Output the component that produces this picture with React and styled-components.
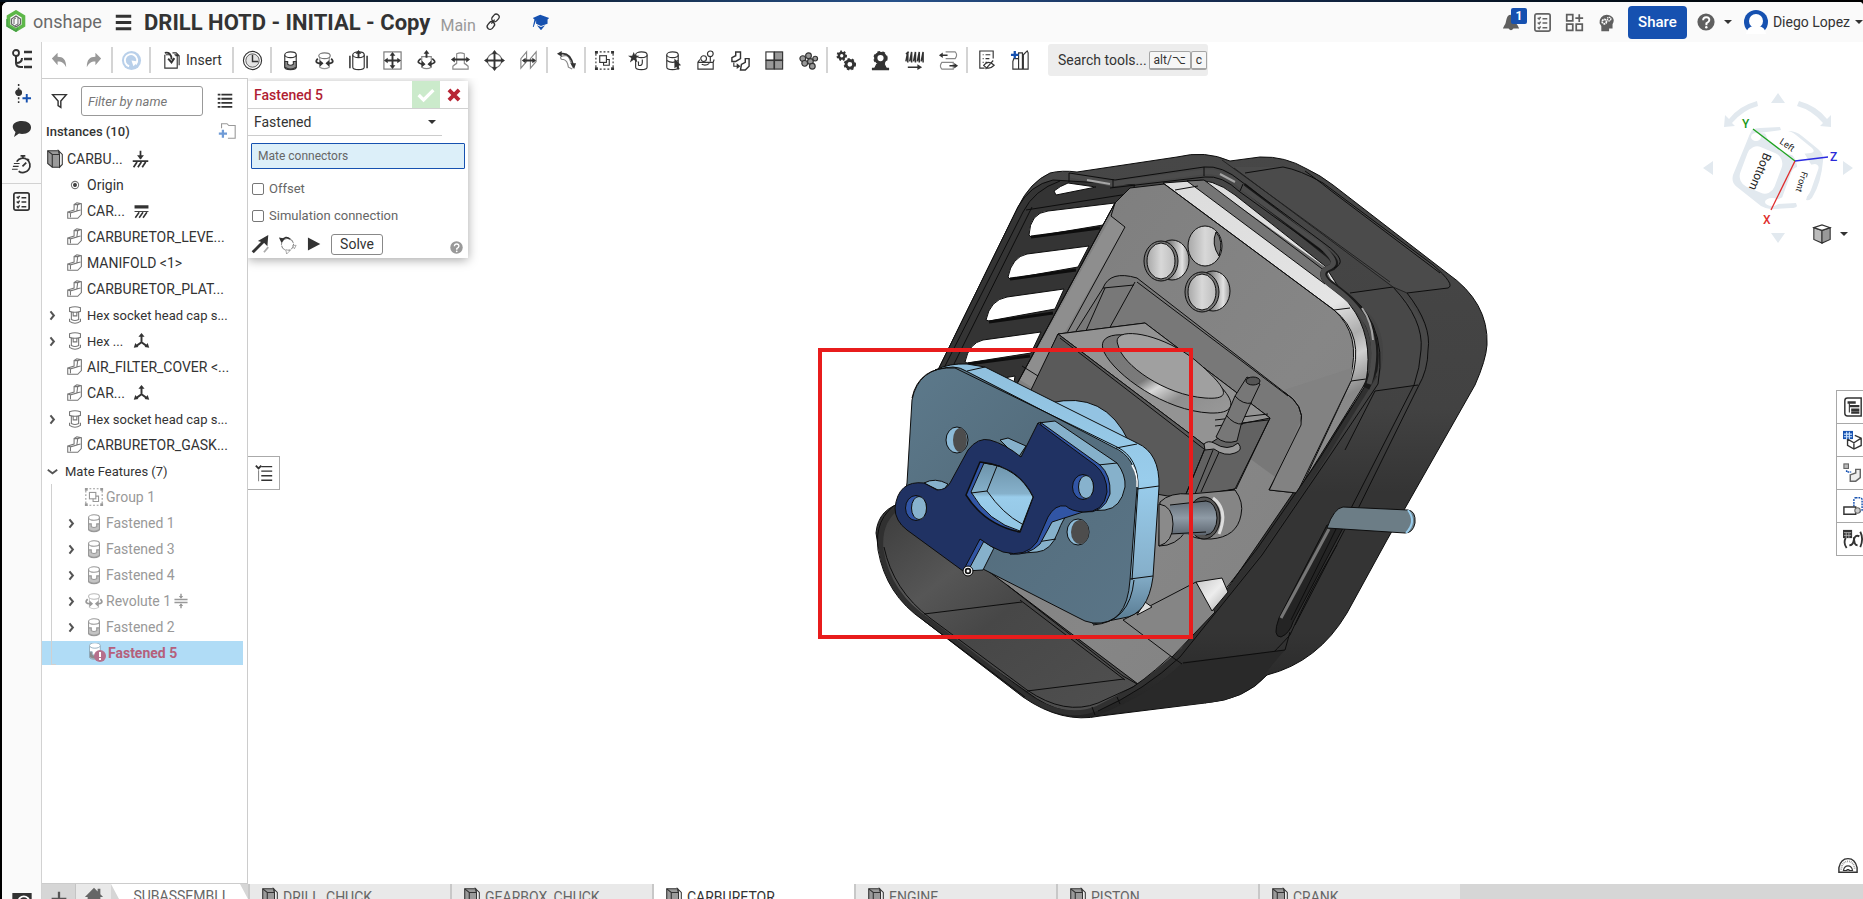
import React from "react";
import styled, { createGlobalStyle, css } from "styled-components";

const Global = createGlobalStyle`
  * { box-sizing: border-box; }
  body { margin: 0; background: #000; overflow: hidden; }
  body, button, input, select { font-family: Roboto, "Noto Sans", sans-serif; font-size: 14px; color: #333; }
  button { border: 0; padding: 0; background: none; cursor: pointer; }
  svg { display: block; flex: none; }
`;

/* ---------- page frame ---------- */
const Page = styled.div`
  height: 100vh;
  padding: 2px 0 0 2px;
  background: linear-gradient(90deg, #04101c 0, #10243c 30%, #27518a 48%, #183058 62%, #04101c 85%, #000 100%) top / 100% 2px no-repeat, #000;
`;
const Frame = styled.div`
  height: 100%;
  display: grid;
  grid-template: 40px minmax(0, 1fr) / 40px minmax(0, 1fr);
  border-radius: 6px 4px 0 0;
  overflow: hidden;
  background: #fff;
`;
const Header = styled.header`
  grid-column: 1 / -1;
  display: flex;
  align-items: center;
  background: #fafafa;
  padding-left: 4px;
`;
const Brand = styled.a`
  display: flex;
  align-items: center;
  gap: 7px;
  width: 107px;
  padding-bottom: 2px;
  font-size: 18px;
  color: #6a6a6a;
  text-decoration: none;
`;
const Title = styled.h1`
  margin: 2px 10px 0 10px;
  font-size: 22px;
  line-height: 36px;
  font-weight: 700;
  white-space: nowrap;
`;
const Branch = styled.span`
  font-size: 16px;
  color: #999;
  margin-right: 8px;
  padding-top: 6px;
`;
const HeadTools = styled.div`
  margin-left: auto;
  display: flex;
  align-items: center;
  color: #5f5f5f;
`;
const HeadButton = styled.button`
  position: relative;
  display: grid;
  place-items: center;
  width: ${(p) => p.$w || 32}px;
  height: 32px;
  color: inherit;
`;
const Badge = styled.span`
  position: absolute;
  top: 2px;
  right: 0;
  width: 16px;
  height: 16px;
  border-radius: 2px;
  background: #1651b0;
  color: #fff;
  font-size: 12px;
  line-height: 16px;
  font-weight: 700;
`;
const Share = styled.button`
  width: 59px;
  height: 33px;
  margin: 0 8px 0 5px;
  border-radius: 4px;
  background: #1651b0;
  color: #fff;
  font-size: 15px;
  font-weight: 500;
`;
const Account = styled.button`
  display: flex;
  align-items: center;
  gap: 5px;
  margin-left: 6px;
`;
const Caret = styled.span`
  display: inline-block;
  border: 4px solid transparent;
  border-top: 4px solid #333;
  border-bottom: 0;
`;

/* ---------- left rail ---------- */
const Rail = styled.nav`
  display: flex;
  flex-direction: column;
  align-items: center;
  background: #fafafa;
  border-right: 1px solid #d2d2d2;
`;
const RailButton = styled.button`
  display: grid;
  place-items: center;
  width: 36px;
  height: ${(p) => p.$h || 35}px;
`;
const RailLine = styled.hr`
  width: 100%;
  margin: 0;
  border: 0;
  border-top: 1px solid #d2d2d2;
`;
const RailFoot = styled.div`
  margin-top: auto;
  height: 9px;
  overflow: hidden;
`;

/* ---------- toolbar ---------- */
const Main = styled.div`
  display: grid;
  grid-template-rows: 36px minmax(0, 1fr) 15px;
  min-width: 0;
`;
const Toolbar = styled.div`
  display: flex;
  align-items: center;
  background: #fff;
`;
const Tool = styled.button`
  display: flex;
  align-items: center;
  justify-content: center;
  gap: 4px;
  width: ${(p) => (p.$wide ? 79 : 34)}px;
  height: 32px;
  flex: none;
`;
const Sep = styled.span`
  width: 2px;
  height: 26px;
  margin: 0 1px;
  background: #d4d4d4;
  flex: none;
`;
const Search = styled.button`
  display: flex;
  align-items: center;
  height: 32px;
  width: 160px;
  margin-left: 11px;
  padding-left: 10px;
  border-radius: 3px;
  background: #ededed;
  flex: none;
`;
const Key = styled.kbd`
  font: 12px Roboto, "DejaVu Sans", sans-serif;
  line-height: 16px;
  padding: 0 4px;
  border: 1px solid #a5a5a5;
  border-bottom-width: 2px;
  border-radius: 2px;
  background: #f6f6f6;
  &:first-of-type { margin-left: 2px; }
`;

/* ---------- body ---------- */
const Body = styled.div`
  display: grid;
  grid-template-columns: 206px minmax(0, 1fr);
  min-height: 0;
`;
const TreePanel = styled.aside`
  border: 1px solid #ccc;
  border-left: 0;
  padding-top: 7px;
`;
const FilterRow = styled.div`
  display: flex;
  align-items: center;
  gap: 12px;
  padding-left: 7px;
  input {
    width: 122px;
    height: 30px;
    border: 1px solid #999;
    border-radius: 3px;
    padding: 0 6px;
    font-size: 13px;
    font-style: italic;
  }
  input::placeholder { color: #777; opacity: 1; }
`;
const Count = styled.div`
  display: flex;
  align-items: center;
  justify-content: space-between;
  height: 30px;
  padding: 0 10px 0 4px;
  font-size: 13px;
  font-weight: 500;
`;
const Tree = styled.ul`
  list-style: none;
  margin: 0;
  padding: 0;
`;
const Row = styled.li`
  display: flex;
  align-items: center;
  height: 26px;
  padding-left: ${(p) => p.$pad}px;
  white-space: nowrap;
  font-size: ${(p) => (p.$small ? 13 : 14)}px;
  color: ${(p) => (p.$dim ? "#999" : "#333")};
  ${(p) => p.$bad && css`
    height: 24px;
    margin: 1px 4px 0 0;
    background: #b0dcf6;
    color: #b5607c;
    font-weight: 700;
  `}
`;
const Twist = styled.span`
  width: 20px;
  flex: none;
`;
const Label = styled.span`
  margin-left: ${(p) => p.$gap || 2}px;
  width: ${(p) => (p.$w ? p.$w + "px" : "auto")};
`;
const Branching = styled.div`
  position: relative;
  &::before {
    content: "";
    position: absolute;
    z-index: 1;
    left: 9px;
    top: 0;
    bottom: 0;
    width: 4px;
    border: 1px solid #d0d0d0;
    border-width: 0 0 1px 1px;
  }
`;
const Canvas = styled.main`
  position: relative;
  overflow: hidden;
  background: #fff;
`;
const OnCanvas = styled.div`
  position: absolute;
  left: ${(p) => p.$left}px;
  right: ${(p) => p.$right}px;
  top: ${(p) => p.$top}px;
  bottom: ${(p) => p.$bottom}px;
`;
const Handle = styled.button`
  display: grid;
  place-items: center;
  width: 32px;
  height: 34px;
  border: 1px solid #aaa;
  border-left: 0;
  background: #fff;
`;
const SideTabs = styled.div`
  width: 27px;
  border: 1px solid #a8a8a8;
  border-width: 1px 0 0 1px;
  background: #fff;
  button {
    display: flex;
    align-items: center;
    width: 100%;
    height: 33px;
    padding-left: 6px;
    border-bottom: 1px solid #a8a8a8;
    overflow: hidden;
  }
`;
const CubeMenu = styled.button`
  display: flex;
  align-items: center;
  gap: 8px;
`;

/* ---------- mate dialog ---------- */
const Dialog = styled.form`
  width: 220px;
  height: 177px;
  background: #fff;
  box-shadow: 0 2px 10px rgba(0, 0, 0, 0.35);
`;
const DialogHead = styled.div`
  display: flex;
  align-items: center;
  height: 28px;
  padding-left: 6px;
  border-bottom: 1px solid #d0d0d0;
  color: #b01e33;
  font-weight: 500;
`;
const Accept = styled.button`
  display: grid;
  place-items: center;
  width: 28px;
  height: 27px;
  margin-left: auto;
  background: #cbeacb;
`;
const Cancel = styled.button`
  display: grid;
  place-items: center;
  width: 28px;
  height: 27px;
`;
const MateType = styled.label`
  display: flex;
  align-items: center;
  width: 194px;
  height: 27px;
  border-bottom: 1px solid #ccc;
  select {
    appearance: none;
    border: 0;
    background: none;
    padding: 0 6px;
    width: 180px;
  }
`;
const Connectors = styled.div`
  height: 26px;
  margin: 7px 3px 6px;
  padding-left: 6px;
  border: 1px solid #1651b0;
  border-radius: 1px;
  background: #dceff9;
  color: #666;
  font-size: 12px;
  line-height: 24px;
`;
const Check = styled.label`
  display: flex;
  align-items: center;
  gap: 5px;
  height: 27px;
  padding-left: 4px;
  color: #666;
  font-size: 13px;
  input {
    appearance: none;
    width: 12px;
    height: 12px;
    margin: 0;
    border: 1px solid #777;
    border-radius: 2px;
  }
`;
const Actions = styled.div`
  display: flex;
  align-items: center;
  gap: 8px;
  height: 30px;
  padding: 0 5px 0 3px;
`;
const Solve = styled.button`
  width: 52px;
  height: 21px;
  margin-left: 2px;
  border: 1px solid #888;
  border-radius: 3px;
`;
const Help = styled.button`
  display: block;
  margin: 6px 0 0 auto;
  color: #999;
`;

/* ---------- bottom tabs ---------- */
const TabBar = styled.nav`
  display: flex;
  height: 15px;
  overflow: hidden;
  background: #d6d6d6;
`;
const AddTab = styled.button`
  display: grid;
  place-items: center;
  width: 34px;
  height: 29px;
  border-right: 1px solid #c4c4c4;
`;
const Crumb = styled.button`
  display: flex;
  align-items: center;
  justify-content: center;
  width: ${(p) => p.$w}px;
  height: 24px;
  background: ${(p) => (p.$on ? "#fff" : "#e9e9e9")};
  color: #666;
  clip-path: ${(p) => (p.$on ? "polygon(0 0, 129px 0, 137px 15px, 100% 100%, 8px 100%, 8px 15px)" : "none")};
`;
const Tab = styled.button`
  display: flex;
  align-items: flex-start;
  gap: 3px;
  width: 202px;
  height: 30px;
  padding: 3px 0 0 10px;
  border-left: 2px solid #c8c8c8;
  background: ${(p) => (p.$on ? "#fff" : "#e9e9e9")};
  color: ${(p) => (p.$on ? "#333" : "#666")};
  span { padding-top: 2px; }
`;

/* ---------- icons ---------- */
const cyl = (
  <>
    <path d="M5 5v13c0 1.500 3 2.500 6 2.500s6-1 6-2.500V5" fill="#fff" />
    <ellipse cx="11" cy="5" rx="6" ry="3" fill="#fff" />
  </>
);
const gear = (cx, cy, r) => (
  <g key={cx + "-" + cy}>
    <circle cx={cx} cy={cy} r={r - 2} fill="none" strokeWidth={r * 0.5} />
    <circle cx={cx} cy={cy} r={r - 0.5} fill="none" strokeWidth="2" strokeDasharray={`${r * 0.38} ${r * 0.38}`} />
  </g>
);
const A = (d) => <path d={d} fill="#333" stroke="none" />;
const icons = {
  undo: <path d="M3 9 9 3v4c6 0 9 3 9 11-2-4-4-6-9-6v4z" fill="#999" stroke="none" />,
  redo: <path d="M19 9 13 3v4c-6 0-9 3-9 11 2-4 4-6 9-6v4z" fill="#999" stroke="none" />,
  update: <><circle cx="11" cy="11" r="10" fill="#b9d0ea" stroke="none" /><path d="M8.500 17a6.500 6.500 0 1 1 7-2" stroke="#fff" strokeWidth="2" /><path d="M11 11l7 1-5 5z" fill="#fff" stroke="none" /></>,
  insert: <><path d="M5 5h4M14 5h3v14H4V5M12 3h4l3 3v10M15 6h4" /><path d="M4 3c4-1 7 1 7 7M7.500 9l3.500 4 3-4.500" strokeWidth="2" /></>,
  clock: <><circle cx="11" cy="11" r="9.500" /><circle cx="11" cy="11" r="7" fill="#e3e3e3" strokeWidth=".8" /><path d="M11 5v7h6" strokeWidth="1.500" /></>,
  fastened: <>{cyl}<path d="M5 12h3v3q3 2 6 0v-3h3v6q-6 4-12 0z" fill="#8b8b8b" /></>,
  revolute: <><path d="M6 7h10v11q-5 3-10 0z" fill="#fff" stroke="#999" /><ellipse cx="11" cy="6" rx="6" ry="3" fill="#fff" stroke="#777" /><path d="M4 9c-3 3-2 5 3 5M18 9c3 3 2 5-3 5" strokeWidth="1.800" />{A("M6 10.500l4 3.500-4 3.500zM16 10.500l-4 3.500 4 3.500z")}</>,
  slider: <>{cyl}<path d="M2 6v13M20 6v13" strokeWidth="1.600" /><path d="M11 8V2" strokeWidth="2" />{A("M8 4l3-4 3 4z")}</>,
  planar: <><rect x="2" y="2" width="18" height="18" fill="#fff" stroke="#777" /><path d="M11 5v12M5 11h12" strokeWidth="2" />{A("M11 2l3 4H8zM11 20l-3-4h6zM2 11l4-3v6zM20 11l-4 3V8z")}</>,
  cylindrical: <><path d="M6 7h10v11q-5 3-10 0z" fill="#fff" stroke="#888" /><path d="M11 8V3" strokeWidth="2" />{A("M8 4l3-4 3 4z")}<path d="M5 9c-5 4-2 5 2 6M17 9c5 4 2 5-2 6" strokeWidth="1.800" />{A("M6 11l4 4-4 3zM16 11l-4 4 4 3z")}</>,
  pin: <><path d="M7 4q4-2 8 0v10q2 1 4 3v3H3v-3q2-2 4-3z" fill="#fff" stroke="#888" /><path d="M4 10h14" strokeWidth="2" />{A("M1 10l4-3v6zM21 10l-4 3V7z")}</>,
  ball: <><circle cx="11" cy="11" r="7.500" fill="#fff" stroke="#777" /><path d="M11 2v18M2 11h18" strokeWidth="2" />{A("M11 0l3 4H8zM11 22l-3-4h6zM0 11l4-3v6zM22 11l-4 3V8z")}</>,
  parallel: <><path d="M3 19V9l6-7v10zM13 19V9l6-7v10z" fill="#fff" stroke="#888" /><path d="M6 11h11" strokeWidth="2" />{A("M4 11l4-3v6zM19 11l-4 3V8z")}</>,
  tangent: <><path d="M5 7q7-3 9 2l4 10M5 7q-1 3 3 3 4 1 5 8l4 2" fill="#fff" stroke="#888" /><path d="M5 4c6-1 11 3 13 12" strokeWidth="1.800" />{A("M1 4l5-3v6zM15 14h6l-2 6z")}</>,
  group: <><rect x="2" y="2" width="18" height="18" strokeDasharray="2 2" /><rect x="6" y="6" width="7" height="7" /><path d="M10 13v3h6v-6h-3" />{A("M1 1h3v3H1zM18 1h3v3h-3zM1 18h3v3H1zM18 18h3v3h-3z")}</>,
  star: <><g transform="translate(3 0)">{cyl}</g><path d="M11 12v4q4 1 4-3v-3" />{A("M6 2l1.600 4H12L8.500 8.500 10 13 6 10.300 2 13l1.500-4.500L0 6h4.400z")}</>,
  pickMate: <>{cyl}<path d="M5 11q6 4 12 0" />{A("M13 9l7 7-3 .5 1.500 3.500-2 1-1.500-3.500-2 2z")}</>,
  mateconn: <><circle cx="8" cy="9" r="3" /><circle cx="15" cy="4" r="3" /><path d="M15 7v5M2 13h16v7H2zM2 13l2-3M18 13l1-3M6 15q4 2 8-1" /></>,
  replicate: <><path d="M2 8l4-2V2h5v7l-5 3H2zM12 15l4-2V9h4v8l-4 4h-5z" fill="#fff" strokeWidth="1.500" /><path d="M4 13v4h4" />{A("M7 14l4 3-4 3z")}</>,
  pattern: <><rect x="2" y="2" width="8.500" height="8.500" fill="#fff" /><rect x="11" y="2" width="8.500" height="8.500" fill="#999" /><rect x="2" y="11" width="8.500" height="9" fill="#999" /><rect x="11" y="11" width="8.500" height="9" fill="#999" /></>,
  cluster: <g fill="#999"><circle cx="5" cy="9" r="3" /><circle cx="11" cy="6" r="3" /><circle cx="7" cy="14" r="3" /><circle cx="13" cy="12" r="3" /><circle cx="18" cy="9" r="2.500" /><circle cx="15" cy="17" r="3" /></g>,
  gears: <>{gear(6, 6, 5)}{gear(14.500, 15, 6)}</>,
  rack: <>{gear(11, 8.500, 7)}<path d="M2 20h18" strokeWidth="2.600" /><path d="M5 19l2-4h8l2 4z" fill="#333" /></>,
  screw: <><path d="M4 2v11M8 2v11M12 2v11M16 2v11M20 2v11M2 4l3-2M2 12l2-10M6 12l2-10M10 12l2-10M14 12l2-10M18 12l2-10" strokeWidth="1.600" /><path d="M4 18h12" strokeWidth="1.600" />{A("M14 15l5 3-5 3z")}</>,
  linear: <><path d="M8 2h10q3 3 0 7H8M4 13h12v7H4q-3-3 0-7z" stroke="#888" fill="#fff" /><path d="M4 5.500h6M12 16.500h6" strokeWidth="1.800" />{A("M1 5.500l4-3v6zM21 16.500l-4-3v6z")}</>,
  bom: <><path d="M18 9V1H4v18h5M7 5h1M10 5h5M7 9h1M10 9h4M7 13h1M10 13h2" /><path d="M8 16q5-6 11 0-6 6-11 0zM10 20l8-9" /></>,
  display: <><path d="M4 9h5v11H3v-8zM9 3h4v17H9zM14 5l4-4 1 2v17h-5z" fill="#fff" /><path d="M1 5h8M5 1v8" stroke="#1651b0" strokeWidth="2.400" /></>,
  funnel: <path d="M4 4h15l-6 7v7l-3-2v-5z" strokeWidth="1.600" />,
  list: <path d="M3 4h3M3 8.500h3M3 13h3M3 17.500h3M7 4h12M7 8.500h12M7 13h12M7 17.500h12" strokeWidth="2" />,
  part: <path d="M3 12l7-2V4l3-2 5 1v12l-4 4H3zM3 12l3 1 7-2 1-7M6 13v5M13 11l4-1M10 4l4 0 3-1" stroke="#777" fill="#fff" />,
  assembly: <><path d="M3 2h12l1 4v14H8l-5-4z" fill="#9a9a9a" /><path d="M15 2l4 4v11l-3 3V6z" fill="#fff" /><path d="M3 2l5 4h8M8 6v14" /></>,
  screwPart: <path d="M5 3q6-2 12 0v4q-6 2-12 0zM7 8v8q4 2 8 0V8M9 8v4h4V8M5 15v3q6 4 12 0v-3" stroke="#777" fill="#fff" />,
  origin: <><circle cx="11" cy="11" r="4" stroke="#777" /><circle cx="11" cy="11" r="1.500" fill="#555" /></>,
  ground: <><path d="M11 1v9M2 13h18" strokeWidth="2" />{A("M7 6h8l-4 5z")}<path d="M3 20l4-6M8 20l4-6M13 20l4-6" strokeWidth="2" /></>,
  fixed: <><path d="M2 5h18" strokeWidth="4" /><path d="M2 11h18" /><path d="M3 19l5-7M8 19l5-7M13 19l5-7" strokeWidth="2" /></>,
  triad: <><path d="M11 3v9l-7 5M11 12l7 5" strokeWidth="2.500" />{A("M11 0l4 5H7zM1 19l2-6 4 5zM21 19l-2-6-4 5z")}</>,
  limit: <><path d="M2 9h18M2 13h18M11 1v6M11 21v-6" strokeWidth="2" stroke="#999" /><path d="M8 4h6l-3 4zM8 18h6l-3-4z" fill="#999" stroke="none" /></>,
  right: <path d="M8 5l5 6-5 6" strokeWidth="3" stroke="#555" />,
  down: <path d="M3 8l8 6 8-6" strokeWidth="3" stroke="#555" />,
  folder: <><path d="M5 8V3h6l2 2h7v14H12" stroke="#999" /><path d="M2 14h9M6.500 9.500v9" stroke="#6f9bd6" strokeWidth="2.500" /></>,
  tree: <><circle cx="5" cy="4" r="3" strokeWidth="1.800" /><path d="M5 7v7q0 4 5 4h2M5 14q6 0 6-5" strokeWidth="2" /><path d="M13 3h8M13 10h8M13 18h8" strokeWidth="2.400" /></>,
  addFeature: <><path d="M8 0v6M8 14v8" strokeDasharray="2 2" strokeWidth="1.600" /><circle cx="8" cy="9" r="3" fill="#333" /><path d="M12 15h9M16.500 10.500v9" stroke="#1651b0" strokeWidth="2" /></>,
  chat: <path d="M11 3c12 0 12 13 0 13-1 0-2 0-3-.4L3 19l1.500-5C-1 9 2 3 11 3z" fill="#333" stroke="none" />,
  timer: <><path d="M6 8a7.500 7.500 0 1 1 2 10M10 2h5M12.500 2v3M17 5l2 2M12 13l4-4" strokeWidth="1.800" /><path d="M3 10h6M2 13h6M1 16h6" /></>,
  checklist: <><rect x="3" y="2" width="16" height="18" rx="2" strokeWidth="1.800" /><path d="M6 6l1.500 1.500L9 5M6 11l1.500 1.500L9 10M6 16l1.500 1.500L9 15M11 7h5M11 11.500h5M11 16.500h5" strokeWidth="1.500" /></>,
  bell: <path d="M11 2c-7 0-5 10-8 13l-2 4h20l-2-4c-3-3-1-13-8-13zM8 19h6q-3 4-6 0z" fill="currentColor" stroke="none" />,
  apps: <><path d="M2 2h7v7H2zM2 13h7v7H2zM13 13h7v7h-7z" strokeWidth="2" /><path d="M12 6h9M16.500 1.500v9" strokeWidth="2" /></>,
  head: <><path d="M11 2a8.500 8.500 0 0 0-8 10l2 3v6h9v-3h4v-5c4-6-1-11-7-11z" fill="currentColor" stroke="none" /><circle cx="8.500" cy="10" r="2.500" stroke="#fafafa" strokeWidth="2" strokeDasharray="2 .6" /><circle cx="14" cy="7" r="2" stroke="#fafafa" strokeWidth="1.600" strokeDasharray="1.500 .6" /></>,
  link: <g strokeWidth="1.600"><rect x="9" y="2.500" width="10" height="7" rx="3.500" transform="rotate(-50 14 6)" /><rect x="3" y="12" width="10" height="7" rx="3.500" transform="rotate(-50 8 15)" /><path d="M9 13l4-5" /></g>,
  cap: <path d="M10 2l11 4-2 2v5l-8 3-6-3V9l-3 8H1L3 8 1 6zM6 15l5 6 5-6-5 2z" fill="#1651b0" stroke="none" />,
  home: <path d="M11 2l4 4V3h3v6l3 3h-3v8H4v-8H1z" fill="#666" stroke="none" />,
  plus: <path d="M11 2v18M2 11h18" stroke="#555" strokeWidth="2.800" />,
  cube: <><path d="M2 4l9 3v14l-9-4z" fill="#bbb" /><path d="M11 7l9-3v13l-9 4z" fill="#999" /><path d="M2 4l9-3 9 3-9 3z" fill="#fff" /></>,
  configs: <><path d="M5 1h15v20H5q-3 0-3-3V4q0-3 3-3z" strokeWidth="1.600" /><path d="M5 6h9M7 10h11M9 14h9M9 17h9" strokeWidth="2.600" /><path d="M7 7v10" /></>,
  tableCube: <><path d="M5 10v7l7 4 8-4V9l-7-3M5 10l7 4 8-5M12 14v7" fill="#fff" strokeWidth="1.500" /><rect x="0" y="1" width="11" height="9" fill="#1651b0" stroke="none" /><path d="M1 4.500h9M1 7.500h9M4 2v8M7 2v8" stroke="#cfe6ff" /></>,
  explode: <><rect x="1" y="1" width="5" height="5" fill="#bbb" stroke="#666" /><path d="M4 8v2h5" stroke="#1651b0" strokeDasharray="2 1" strokeWidth="1.600" /><path d="M8 13l6-2V7h5v9l-5 4H8z" stroke="#666" strokeWidth="1.600" fill="#eee" /></>,
  motion: <><rect x="12" y="2" width="9" height="15" rx="2" stroke="#1651b0" strokeDasharray="2 1" strokeWidth="1.600" /><path d="M1 12h13v8H1z" fill="#fff" strokeWidth="1.600" /><circle cx="16" cy="16" r="3" fill="#ccc" stroke="#666" /></>,
  variables: <><path d="M3 10q-3 5 1 11M19 3q4 8 0 17" strokeWidth="2" /><path d="M7 18q4 0 5-6t6-4M12 9q0 9 4 9" strokeWidth="2.200" /><rect x="0" y="1" width="10" height="9" fill="#333" stroke="none" /><path d="M1 4h8M1 7h8M3.500 4v6M6.500 4v6" stroke="#ccc" strokeWidth=".8" /></>,
  protractor: <><path d="M1 19v-5Q3 4 11 4t10 10v5z" fill="#fff" strokeWidth="1.600" /><path d="M3.500 16q1-9 7.500-9t7.500 9" stroke="#999" strokeDasharray="1 1" strokeWidth="2" /><path d="M6 17q1-5 5-5t5 5h-4v-1h-2v1z" /></>,
  handle: <><path d="M2 3l3 3 3-3" strokeWidth="2" /><path d="M5 8v12" stroke="#888" /><path d="M8 4h12M8 9h12M8 14h12M8 19h12" strokeWidth="1.500" /></>,
  flip: <><path d="M2 20l13-13" strokeWidth="3.400" />{A("M20 0l-1 13-4-4-7-2z")}<path d="M15 20l5-6" stroke="#aaa" strokeWidth="2" /></>,
  rotate: <><circle cx="11" cy="11" r="7" strokeDasharray="6 1" stroke="#888" /><path d="M4 7q5-7 10-2" strokeWidth="1.800" />{A("M1 3l7 1-4 5z")}<path d="M17 12h4l-2 4zM9 17l5 1-4 4z" stroke="#888" fill="#fff" strokeWidth=".8" /></>,
  play: A("M4 2l17 9-17 9z"),
  help: <><circle cx="11" cy="11" r="10.500" fill="currentColor" stroke="none" /><path d="M7.500 9q0-4 4-3.800T15 9q0 2-3.500 3.800V15" stroke="#fff" strokeWidth="2.400" /><circle cx="11.400" cy="17.500" r="1.500" fill="#fff" stroke="none" /></>,
  tick: <path d="M2 11l6 6L20 5" stroke="#fff" strokeWidth="4" />,
  cross: <path d="M3 3l16 16M19 3L3 19" stroke="#b82535" strokeWidth="6" />,
  camera: <><path d="M1 4h20v16H1z" fill="#333" /><circle cx="13" cy="13" r="6" stroke="#fff" strokeWidth="2" /><circle cx="13" cy="12" r="1" fill="#fff" /></>,
  hamburger: <path d="M1 3h20M1 11h20M1 19h20" strokeWidth="4" />,
};
const Icon = ({ n, s = 20, o }) => (
  <svg width={s} height={s} viewBox="0 0 22 22" fill="none" stroke={["bell", "apps", "head"].includes(n) ? "currentColor" : "#333"} strokeWidth="1.200" opacity={o} aria-hidden="true">
    {icons[n]}
  </svg>
);

const Logo = () => (
  <svg width="20" height="22" viewBox="0 0 20 22" fill="none" aria-hidden="true">
    <path d="M10 2l7.500 4.500v9L10 20l-7.500-4.500v-9z" stroke="#5db749" strokeWidth="3.600" />
    <path d="M1 9v7l9 5 2-3" stroke="#46a046" strokeWidth="1.500" />
    <path d="M10 6l4.500 3v5L10 17l-4.500-3V9z" stroke="#666" strokeWidth="1.300" />
    <path d="M12 8v6l-3 1.500M8 14V9l2-1" stroke="#666" />
  </svg>
);
const Avatar = () => (
  <svg width="24" height="24" viewBox="0 0 24 24" aria-hidden="true">
    <circle cx="12" cy="12" r="12" fill="#1651b0" />
    <circle cx="12" cy="11" r="7" fill="#fff" />
    <path d="M2 24q1-7 7-8h6q6 1 7 8z" fill="#fff" />
  </svg>
);

/* ---------- view cube ---------- */
const ViewCube = () => (
  <svg width="151" height="152" viewBox="1703 92 151 152" fontFamily="Roboto, sans-serif">
    <g fill="#e2e9ef">
      <path d="M1778 93l7 10h-14zM1778 243l7-10h-14zM1703 168l10-7v14zM1853 168l-10-7v14z" />
      <path d="M1757 101q-18 5-28 18l-4-4-1 12 11-1-3-3q11-13 26-17zM1799 101q18 5 28 18l4-4 0 12-11-1 3-3q-11-13-26-17z" />
      <path d="M1752 130q3-2 8-2l20-1 1 3-22 3q12 0 20 9l14 14q5 6 4 16l-5 21-22 10q5 2 8 1l18-1 1 3q-1 2-6 2l-17 1q-6 1-13-3l-24-19q-6-4-4-12l14-34q2-6 5-11z" />
      <path d="M1788 131q8 0 14 5l16 13q6 5 5 12-2 22-10 35-2 5-7 4l9-29-12-20-11-13z" />
    </g>
    <rect x="-19" y="-21" width="38" height="42" rx="11" transform="matrix(.9 .38 -.35 .94 1761 170)" fill="#fff" />
    <path d="M1765 133l22-2q4 0 9 4l16 13q4 4-1 5l-19 2q-4 0-8-3l-16-12zM1797 167l18-3q5 1 3 6l-7 20q-3 7-7 8l-19 2q-4 0-2-5l8-22q2-5 6-6z" fill="#fff" />
    <ellipse cx="1756" cy="137" rx="5" ry="4" fill="#fff" /><ellipse cx="1772" cy="202" rx="7" ry="4" fill="#fff" />
    <text x="0" y="0" fontSize="12" fill="#222" transform="translate(1764 152) rotate(113)">Bottom</text>
    <text x="0" y="0" fontSize="9" fill="#222" transform="translate(1779 143) rotate(34)">Left</text>
    <text x="0" y="0" fontSize="9" fill="#222" transform="translate(1802 171) rotate(108)">Front</text>
    <path d="M1795 161l-42-32" stroke="#1fa31f" strokeWidth="1.300" />
    <path d="M1795 161l-24 49" stroke="#e02b2b" strokeWidth="1.300" />
    <path d="M1795 161l33-4" stroke="#2a2ae0" strokeWidth="1.300" />
    <g fontSize="12" fontWeight="500">
      <text x="1742" y="128" fill="#1a991a">Y</text>
      <text x="1763" y="224" fill="#e03030">X</text>
      <text x="1830" y="161" fill="#2a2ad8">Z</text>
    </g>
  </svg>
);

/* ---------- carburetor model ---------- */
const Model = () => (
  <svg width="680" height="570" viewBox="814 152 680 570" fill="none" stroke="#0d0d0d" strokeWidth="1" strokeLinejoin="round">
    <defs>
      <linearGradient id="shell" x1="0" y1="0" x2="0" y2="1"><stop offset="0" stopColor="#474747" /><stop offset=".45" stopColor="#424242" /><stop offset=".6" stopColor="#343434" /><stop offset=".85" stopColor="#343434" /><stop offset="1" stopColor="#232323" /></linearGradient>
      <linearGradient id="tray" x1="0" y1="0" x2="1" y2="1"><stop offset="0" stopColor="#3c3c3c" /><stop offset=".3" stopColor="#565656" /><stop offset=".5" stopColor="#474747" /><stop offset="1" stopColor="#505050" /></linearGradient>
      <linearGradient id="plate" x1="0" y1="0" x2="1" y2="1"><stop offset="0" stopColor="#7c7c7c" /><stop offset=".6" stopColor="#868686" /><stop offset="1" stopColor="#808080" /></linearGradient>
      <linearGradient id="light" x1="0" y1="0" x2="1" y2="1"><stop offset="0" stopColor="#c8c8c8" /><stop offset=".5" stopColor="#ededed" /><stop offset="1" stopColor="#a9a9a9" /></linearGradient>
      <linearGradient id="band" gradientUnits="userSpaceOnUse" x1="1180" y1="185" x2="1330" y2="470"><stop offset="0" stopColor="#dcdcdc" /><stop offset=".55" stopColor="#e4e4e4" /><stop offset=".66" stopColor="#adadad" /><stop offset=".72" stopColor="#d0d0d0" /><stop offset=".82" stopColor="#888" /><stop offset="1" stopColor="#8c8c8c" /></linearGradient>
      <linearGradient id="tube" x1="0" y1="0" x2="1" y2="0"><stop offset="0" stopColor="#a8a8a8" /><stop offset=".5" stopColor="#d8d8d8" /><stop offset="1" stopColor="#bdbdbd" /></linearGradient>
      <linearGradient id="sleeve" x1="0" y1="0" x2="1" y2="0"><stop offset=".4" stopColor="#777" /><stop offset=".8" stopColor="#e2e2e2" /><stop offset="1" stopColor="#999" /></linearGradient>
      <linearGradient id="ring" x1="0" y1="0" x2="1" y2="1"><stop offset="0" stopColor="#777" /><stop offset=".45" stopColor="#7a7a7a" /><stop offset=".55" stopColor="#d8d8d8" /><stop offset=".7" stopColor="#8e8e8e" /><stop offset="1" stopColor="#999" /></linearGradient>
      <linearGradient id="edge" x1="0" y1="0" x2="0" y2="1"><stop offset="0" stopColor="#8fbfdd" /><stop offset=".45" stopColor="#99cdec" /><stop offset=".8" stopColor="#86b0cb" /><stop offset="1" stopColor="#56788f" /></linearGradient>
      <linearGradient id="port" x1="0" y1="0" x2="0" y2="1"><stop offset="0" stopColor="#6d93aa" /><stop offset=".45" stopColor="#86b1cb" /><stop offset=".5" stopColor="#9acdeb" /><stop offset="1" stopColor="#93c5e3" /></linearGradient>
      <linearGradient id="shaft" x1="0" y1="0" x2="0" y2="1"><stop offset="0" stopColor="#626c76" /><stop offset=".5" stopColor="#8f9ba6" /><stop offset="1" stopColor="#5d6670" /></linearGradient>
      <linearGradient id="faceShade" x1="0" y1="0" x2="1" y2="1"><stop offset="0" stopColor="#5d7a8c" /><stop offset=".45" stopColor="#546d7d" /><stop offset="1" stopColor="#5a7587" /></linearGradient>
    </defs>

    {/* housing */}
    <path d="M938 370 1018 207Q1030 182 1050 173 1062 170 1077 172L1177 157Q1205 150 1230 161L1260 157Q1285 156 1307 169 1320 175 1333 185L1447 273Q1489 302 1487 345 1486 360 1475 385L1387 540 1347 613Q1318 662 1267 675 1245 700 1205 703L1100 716Q1062 724 1023 697L923 620Q882 585 876 533 878 508 905 502z" fill="url(#shell)" />
    <path d="M1233 167 1283 167Q1310 172 1323 183L1433 265Q1458 287 1446 289L1407 293 1393 287z" fill="#4b4b4b" stroke="none" />
    <path d="M1245 173 1283 167Q1300 170 1323 183L1433 265Q1456 285 1448 288L1407 293M1305 171Q1315 178 1330 190L1440 273" />
    <path d="M1350 293 1393 287Q1432 322 1429 345 1430 365 1418 385L1375 391Q1392 345 1373 318z" fill="#484848" stroke="none" />
    <path d="M1350 293 1393 287M1375 391 1418 385" />
    <path d="M1393 287Q1424 320 1421 350 1420 368 1414 385L1345 520M1407 293Q1432 325 1428 350 1428 370 1418 387L1350 525M1337 545Q1310 590 1290 635 1240 690 1205 703M1375 391 1345 450" />
    <path d="M1234 168 1393 287 1407 293M1222 160 1390 282" stroke="#222" />
    <path d="M1183 662 1285 650Q1280 655 1260 680 1240 700 1205 703L1098 715Q1150 695 1183 662z" fill="#292929" stroke="none" />

    {/* wall slots */}
    <path d="M938 370 1018 207Q1030 185 1053 180L1135 185 1020 390z" fill="#343434" />
    <path d="M945 366 1023 212Q1034 190 1060 181M952 368 1032 207M1026 210 1128 194" />
    <g fill="#fff">
      <path d="M1054 191Q1060 186 1068 183L1096 187 1056 195z" />
      <path d="M1029 235Q1030 213 1048 211L1115 203 1103 225 1031 237z" />
      <path d="M1008 277Q1012 257 1027 254L1089 246 1078 267 1010 279z" />
      <path d="M986 320Q990 300 1007 297L1064 289 1055 309 989 321z" />
      <path d="M965 362Q969 343 983 340L1041 332 1031 353 967 363z" />
      <path d="M1004 378 1015 376 1014 383z" />
    </g>
    <path d="M1031 237 1100 228M1010 279 1076 270M989 322 1053 313M968 364 1030 356" strokeWidth="3" />

    {/* inside of the housing */}
    <path d="M1130 188 1190 181 1340 300Q1370 322 1367 385L1213 610Q1170 672 1137 684L960 550 1018 382 1115 203z" fill="url(#plate)" />
    <path d="M1163 183 1190 181Q1212 177 1235 195L1325 266 1350 305Q1374 335 1366 382L1297 493 1270 490 1350 378Q1362 335 1334 310z" fill="url(#band)" />
    <path d="M1200 181Q1205 181 1213 188L1325 267 1333 284 1322 274 1200 190 1190 182z" fill="#6b6b6b" stroke="none" />
    <path d="M1187 181 1204 180 1325 271 1325 284z" fill="#757575" />
    <path d="M1163 183 1334 310Q1366 335 1351 381L1300 490" />
    <path d="M1334 310 1350 308M1351 381 1366 379M1175 190 1198 186" />
    <path d="M1111 217 1125 227 1033 388 1020 380z" fill="#8e8e8e" stroke="none" />
    <path d="M1115 203 1111 216 1125 227 1037 388M1115 203 1018 382M1022 366 1038 376" />
    <path d="M1076 331 1103 288Q1110 270 1137 278L1284 392Q1305 405 1301 425 1300 440 1269 490L1297 493" fill="#787878" stroke="none" />
    <path d="M1076 331 1103 288Q1110 270 1137 278L1284 392Q1305 405 1301 425 1299 438 1269 490" />
    <path d="M1085 333 1105 288M1109 329 1135 282M1103 288 1134 285M1137 282 1288 396" />
    <path d="M1270 490 1302 418Q1304 402 1284 390L1352 368 1351 382 1297 493z" fill="#828282" stroke="none" />
    <path d="M1284 392Q1305 405 1301 425L1269 490 1297 493 1351 381" />

    {/* bosses */}
    <g>
      <ellipse cx="1172" cy="260" rx="17" ry="20" fill="url(#sleeve)" /><ellipse cx="1161" cy="261" rx="17" ry="20" fill="#777" /><ellipse cx="1161" cy="261" rx="14" ry="18" fill="url(#tube)" />
      <ellipse cx="1205" cy="246" rx="17" ry="20" fill="url(#tube)" /><path d="M1216 232q8 9 3 24-8-12-3-24z" fill="#777" />
      <ellipse cx="1213" cy="291" rx="17" ry="20" fill="url(#sleeve)" /><ellipse cx="1202" cy="292" rx="17" ry="20" fill="#777" /><ellipse cx="1202" cy="292" rx="14" ry="18" fill="url(#tube)" />
    </g>

    {/* carburetor block */}
    <path d="M1058 334 1145 323 1270 418 1235 489 1180 500 1110 470 1030 395z" fill="#626262" />
    <path d="M1058 334 1145 323 1270 418 1240 424 1206 446z" fill="#939393" />
    <path d="M1058 334 1206 446 1186 494Q1150 505 1110 460L1030 392z" fill="#5a5a5a" />
    <path d="M1060 338 1204 449M1206 446 1186 494M1213 450 1195 494M1220 450 1201 492M1270 418 1236 489M1235 489 1180 498" />
    <path d="M1104 352C1092 325 1150 330 1195 365 1240 398 1240 414 1210 413 1165 411 1115 375 1104 352z" fill="url(#ring)" />
    <path d="M1118 345C1110 325 1160 332 1195 360 1230 390 1232 400 1205 398 1165 395 1122 365 1118 345z" fill="#a0a0a0" />
    <path d="M1215 420 1268 414M1215 426 1268 420" />
    <path d="M1204 444Q1208 440 1214 443 1228 452 1238 443 1244 450 1235 453 1225 457 1214 449L1205 450z" fill="#999" />
    <path d="M1247 377 1235 396 1227 415 1216 437Q1225 445 1237 441L1241 425 1249 407 1260 384z" fill="#777" />
    <ellipse cx="1253" cy="381" rx="7" ry="4" fill="#555" /><path d="M1235 396q8 9 17 7M1226 415q8 10 17 9" />

    {/* throttle shaft */}
    <path d="M1160 502q10-10 30-8l45-4q9 12 6 25-4 22-30 24-20 1-25-8-10 15-27 15z" fill="#858585" />
    <ellipse cx="1204" cy="518" rx="16" ry="21" fill="#555" /><ellipse cx="1206" cy="518" rx="11" ry="17" fill="url(#shaft)" />
    <path d="M1170 505 1206 501v34l-36-1z" fill="url(#shaft)" stroke="none" />
    <path d="M1170 505 1206 501M1170 534 1206 532" />
    <path d="M1159 504q14 2 14 20t-14 22z" fill="#8a8a8a" />
    <path d="M1213 498q16 12 6 36" stroke="#ddd" strokeWidth="3" />

    {/* floor of the tray */}
    <path d="M900 506Q876 520 881 550 887 592 923 619L1027 692Q1066 722 1100 706L1138 684 1007 585z" fill="url(#tray)" />
    <path d="M924 614 1022 602M1027 691 1124 679M1007 585 1123 676 1137 684M1020 600 1125 680" />
    <path d="M900 506Q878 520 881 550 888 595 930 622L1025 695Q1065 722 1098 708L1133 690Q1155 675 1183 650L1259 552 1322 460 1375 375" stroke="#303030" strokeWidth="5" />
    <path d="M898 503Q874 518 878 550 886 595 923 620L1025 697M1092 707 1095 715M1117 697 1120 704M1172 657 1182 664M1098 711Q1145 690 1180 657L1262 555 1327 460 1378 384Q1384 350 1373 325 1363 303 1345 293" />
    <path d="M884 547Q893 590 930 618L1027 690Q1065 716 1098 703L1133 687Q1155 672 1180 647L1257 549 1320 458 1370 378" />
    <path d="M1123 620 1196 582 1215 612 1172 657z" fill="#858585" />
    <path d="M1196 582 1222 578 1228 592 1212 611z" fill="url(#light)" />
    <path d="M1145 602l7 5-15 8z" fill="#ddd" />

    {/* rim */}
    <path d="M1243 186 1323 250Q1342 264 1330 268 1319 272 1327 281L1346 296Q1381 325 1374 370L1366 388" stroke="#1a1a1a" strokeWidth="7" />
    <path d="M1070 175 1112 184 1203 172Q1225 170 1243 188L1321 246Q1340 263 1330 267 1316 272 1329 284 1354 300 1368 325 1379 350 1369 384" stroke="#4c4c4c" strokeWidth="5" />
    <path d="M1069 173 1115 180 1204 167Q1222 165 1242 182L1325 244Q1350 262 1334 268M1110 188 1205 177Q1222 175 1240 192L1323 252M1069 173v9M1113 179v9M1204 167v9M1243 184l-3 7" />
    <path d="M1087 180 1110 184M1220 174 1235 182M1362 308q10 14 11 32" stroke="#a5a5a5" strokeWidth="2" />

    {/* lever */}
    <path d="M1327 525 1279 618Q1272 637 1281 637 1290 633 1293 622L1343 528z" fill="#242424" />
    <path d="M1329 529 1281 618" stroke="#777" strokeWidth="3" /><path d="M1336 529 1291 620M1345 529 1295 625" />
    <path d="M1327 528Q1334 508 1343 507L1408 510Q1416 511 1415 523 1413 533 1405 533z" fill="#6c7d86" />
    <path d="M1408 510q9 12-2 23" stroke="#9acdec" strokeWidth="2" />
    <path d="M1183 663 1285 650 1290 632" />

    {/* manifold */}
    <path d="M1050 403Q1105 390 1129 442z" fill="#93c3e2" />
    <path d="M935 370Q950 363 967 364L985 367 1137 443Q1160 453 1159 487L1153 577Q1148 615 1123 618L1093 624 960 372z" fill="url(#edge)" />
    <path d="M907 483 912 400Q918 368 953 367 960 367 968 372L1113 447Q1137 457 1137 488L1130 580Q1127 626 1093 623 1085 622 1077 617L983 569 900 520z" fill="url(#faceShade)" />
    <path d="M912 398Q919 366 955 368L1117 447Q1139 458 1138 488L1132 580M967 371 985 367M1116 448 1137 444M1137 489 1159 486M1130 579 1153 576M1134 580Q1130 622 1093 625" />
    <path d="M1132 465q6 10 5 22" stroke="#fff" strokeWidth="1.500" />
    <ellipse cx="957" cy="440" rx="11" ry="13" fill="#8dbbd8" /><ellipse cx="960" cy="440" rx="7" ry="12" fill="#4d4d4d" stroke="none" />
    <ellipse cx="1078" cy="532" rx="11" ry="13" fill="#8dbbd8" /><ellipse cx="1080" cy="532" rx="9" ry="12" fill="#4d4d4d" stroke="none" />
    <path d="M1038 423 1055 421 1117 463Q1126 475 1125 487 1121 508 1105 510L1070 512Q1063 518 1058 532 1051 551 1037 552L1010 554zM1000 440 1008 438 1026 446 1018 458zM924 483Q935 477 948 484L942 492zM980 539 994 548 983 570 965 571z" fill="#86b1cb" />
    <path d="M1048 517 1068 511M1037 542 1056 539M1098 465 1117 463" />

    {/* gasket */}
    <path d="M1040 422 1100 465Q1111 475 1110 494 1104 514 1083 512L1052 522 1040 544Q1028 556 1010 554L1010 530 1060 480zM980 539 984 541 968 571 960 566z" fill="#3155a5" />
    <path d="M1038 423 1095 465Q1107 475 1107 492 1104 513 1083 512 1071 511 1066 506 1055 504 1048 517L1037 542Q1026 558 1003 552 990 547 980 539L963 571 907 530Q895 521 895 508 898 480 924 483L937 490Q946 490 950 483L968 450Q978 437 990 440 1005 444 1021 457z" fill="#203263" />
    <path d="M980 462Q1018 466 1033 497L1020 532Q985 525 966 495z" fill="#3155a5" strokeWidth="1.500" />
    <path d="M984 463Q1018 467 1033 497L1020 531Q988 522 971 492z" fill="url(#port)" />
    <path d="M997 466 987 491Q1003 514 1022 524M971 493 987 491M984 463 1000 466" />
    <ellipse cx="1083" cy="487" rx="10.500" ry="12.500" fill="#3155a5" /><ellipse cx="1086" cy="487" rx="7.500" ry="11.500" fill="#87b2cd" />
    <ellipse cx="916" cy="508" rx="10.500" ry="12.500" fill="#3155a5" /><ellipse cx="919" cy="508" rx="7.500" ry="11.500" fill="#87b2cd" />
    <circle cx="968" cy="571" r="4" fill="#111" stroke="#fff" strokeWidth="1.500" /><circle cx="968" cy="571" r="1.500" fill="#fff" stroke="none" />
    <circle cx="968" cy="571" r="5" />

    <rect x="820" y="350" width="371" height="287" stroke="#e81c1c" strokeWidth="4" strokeLinejoin="miter" />
  </svg>
);

/* ---------- data ---------- */
const mates = ["fastened", "revolute", "slider", "planar", "cylindrical", "pin", "ball", "parallel"];
const tools = ["undo", "redo", "|", "update", "|", "Insert", "|", "clock", "|", ...mates, "|", "tangent", "|", "group", "star", "pickMate", "mateconn", "replicate", "pattern", "cluster", "|", "gears", "rack", "screw", "linear", "|", "bom", "display"];
const instances = [
  { t: "Origin", i: "origin" },
  { t: "CAR...", i: "part", x: "fixed" },
  { t: "CARBURETOR_LEVE...", i: "part" },
  { t: "MANIFOLD <1>", i: "part" },
  { t: "CARBURETOR_PLAT...", i: "part" },
  { t: "Hex socket head cap s...", i: "screwPart", open: true },
  { t: "Hex ...", i: "screwPart", open: true, x: "triad" },
  { t: "AIR_FILTER_COVER <...", i: "part" },
  { t: "CAR...", i: "part", x: "triad" },
  { t: "Hex socket head cap s...", i: "screwPart", open: true },
  { t: "CARBURETOR_GASK...", i: "part" },
];
const features = [
  { t: "Group 1", i: "group" },
  { t: "Fastened 1", i: "fastened", open: true },
  { t: "Fastened 3", i: "fastened", open: true },
  { t: "Fastened 4", i: "fastened", open: true },
  { t: "Revolute 1", i: "revolute", open: true, x: "limit" },
  { t: "Fastened 2", i: "fastened", open: true },
];

const ErrorMate = () => (
  <svg width="20" height="20" viewBox="0 0 20 20" aria-hidden="true">
    <g fill="none" stroke="#8fa9ba" transform="translate(-2 -2) scale(.9)">{icons.fastened}</g>
    <circle cx="13" cy="13" r="6" fill="#b5708c" />
    <path d="M13 9v5M13 15v2" stroke="#fff" strokeWidth="2" />
  </svg>
);

export default function App() {
  return (
    <Page>
      <Global />
      <Frame>
        <Header>
          <Brand href="#home"><Logo />onshape</Brand>
          <HeadButton $w={21} aria-label="Menu"><Icon n="hamburger" s={17} /></HeadButton>
          <Title>DRILL HOTD - INITIAL - Copy</Title>
          <Branch>Main</Branch>
          <HeadButton $w={18} aria-label="Copy link"><Icon n="link" s={18} /></HeadButton>
          <HeadButton $w={79} aria-label="Learning"><Icon n="cap" s={18} /></HeadButton>
          <HeadTools>
            <HeadButton aria-label="Notifications"><Icon n="bell" s={18} /><Badge>1</Badge></HeadButton>
            <HeadButton aria-label="Tasks"><Icon n="checklist" s={21} o={0.75} /></HeadButton>
            <HeadButton aria-label="Apps"><Icon n="apps" s={19} /></HeadButton>
            <HeadButton aria-label="Assistant"><Icon n="head" s={19} /></HeadButton>
            <Share>Share</Share>
            <HeadButton $w={23} aria-label="Help"><Icon n="help" s={18} /></HeadButton>
            <HeadButton $w={20} aria-label="Help menu"><Caret /></HeadButton>
            <Account><Avatar />Diego Lopez<Caret /></Account>
          </HeadTools>
        </Header>

        <Rail aria-label="Panels">
          <RailButton aria-label="Structure"><Icon n="tree" s={22} /></RailButton>
          <RailButton aria-label="Add feature"><Icon n="addFeature" s={21} /></RailButton>
          <RailButton $h={34} aria-label="Comments"><Icon n="chat" s={22} /></RailButton>
          <RailButton $h={37} aria-label="History"><Icon n="timer" s={21} /></RailButton>
          <RailLine />
          <RailButton aria-label="Tasks"><Icon n="checklist" s={21} /></RailButton>
          <RailFoot><Icon n="camera" /></RailFoot>
        </Rail>

        <Main>
          <Toolbar>
            {tools.map((t, i) =>
              t === "|" ? <Sep key={i} /> : t === "Insert" ? (
                <Tool key={i} $wide><Icon n="insert" s={21} />Insert</Tool>
              ) : (
                <Tool key={i} aria-label={t}><Icon n={t} s={21} /></Tool>
              )
            )}
            <Search>Search tools...<Key>alt/⌥</Key><Key>c</Key></Search>
          </Toolbar>

          <Body>
            <TreePanel>
              <FilterRow>
                <Icon n="funnel" />
                <input aria-label="Filter by name" placeholder="Filter by name" />
                <Icon n="list" />
              </FilterRow>
              <Count>Instances (10)<Icon n="folder" /></Count>
              <Tree>
                <Row $pad={3}><Icon n="assembly" /><Label $w={64}>CARBU...</Label><Icon n="ground" s={19} /></Row>
                {instances.map((r, i) => (
                  <Row key={i} $pad={3} $small={r.t.startsWith("Hex")}>
                    <Twist>{r.open && <Icon n="right" s={15} />}</Twist>
                    <Icon n={r.i} />
                    <Label $w={r.x ? 46 : 0}>{r.t}</Label>
                    {r.x && <Icon n={r.x} s={17} />}
                  </Row>
                ))}
                <Row $pad={4} $small><Icon n="down" s={13} /><Label $gap={6}>Mate Features (7)</Label></Row>
              </Tree>
              <Branching>
                <Tree>
                  {features.map((r) => (
                    <Row key={r.t} $pad={22} $dim>
                      <Twist>{r.open && <Icon n="right" s={15} />}</Twist>
                      <Icon n={r.i} o={0.5} />
                      <Label>{r.t}</Label>
                      {r.x && <><Label /><Icon n={r.x} s={16} /></>}
                    </Row>
                  ))}
                  <Row $pad={45} $bad><ErrorMate /><Label $gap={1}>Fastened 5</Label></Row>
                </Tree>
              </Branching>
            </TreePanel>

            <Canvas>
              <OnCanvas $left={566} $top={74}><Model /></OnCanvas>
              <OnCanvas $left={0} $top={3}>
                <Dialog onSubmit={(e) => e.preventDefault()}>
                  <DialogHead>
                    Fastened 5
                    <Accept aria-label="Accept"><Icon n="tick" s={18} /></Accept>
                    <Cancel type="button" aria-label="Cancel"><Icon n="cross" s={14} /></Cancel>
                  </DialogHead>
                  <MateType><select aria-label="Mate type"><option>Fastened</option></select><Caret /></MateType>
                  <Connectors>Mate connectors</Connectors>
                  <Check><input type="checkbox" />Offset</Check>
                  <Check><input type="checkbox" />Simulation connection</Check>
                  <Actions>
                    <Icon n="flip" s={19} /><Icon n="rotate" s={19} /><Icon n="play" s={16} />
                    <Solve type="button">Solve</Solve>
                    <Help type="button" aria-label="Help"><Icon n="help" s={13} /></Help>
                  </Actions>
                </Dialog>
              </OnCanvas>
              <OnCanvas $left={0} $top={378}><Handle aria-label="Collapse list"><Icon n="handle" /></Handle></OnCanvas>
              <OnCanvas $right={9} $top={14}><ViewCube /></OnCanvas>
              <OnCanvas $right={15} $top={146}><CubeMenu aria-label="View options"><Icon n="cube" /><Caret /></CubeMenu></OnCanvas>
              <OnCanvas $right={0} $top={312}>
                <SideTabs>
                  {["configs", "tableCube", "explode", "motion", "variables"].map((n) => (
                    <button key={n} aria-label={n}><Icon n={n} /></button>
                  ))}
                </SideTabs>
              </OnCanvas>
              <OnCanvas $right={5} $bottom={9}><Icon n="protractor" /></OnCanvas>
            </Canvas>
          </Body>

          <TabBar aria-label="Document tabs">
            <AddTab aria-label="Add tab"><Icon n="plus" s={18} /></AddTab>
            <Crumb $w={35} aria-label="Home"><Icon n="home" /></Crumb>
            <Crumb $w={137} $on>SUBASSEMBLI</Crumb>
            {["DRILL_CHUCK", "GEARBOX_CHUCK", "CARBURETOR", "ENGINE", "PISTON", "CRANK"].map((t) => (
              <Tab key={t} $on={t === "CARBURETOR"}><Icon n="assembly" /><span>{t}</span></Tab>
            ))}
          </TabBar>
        </Main>
      </Frame>
    </Page>
  );
}
